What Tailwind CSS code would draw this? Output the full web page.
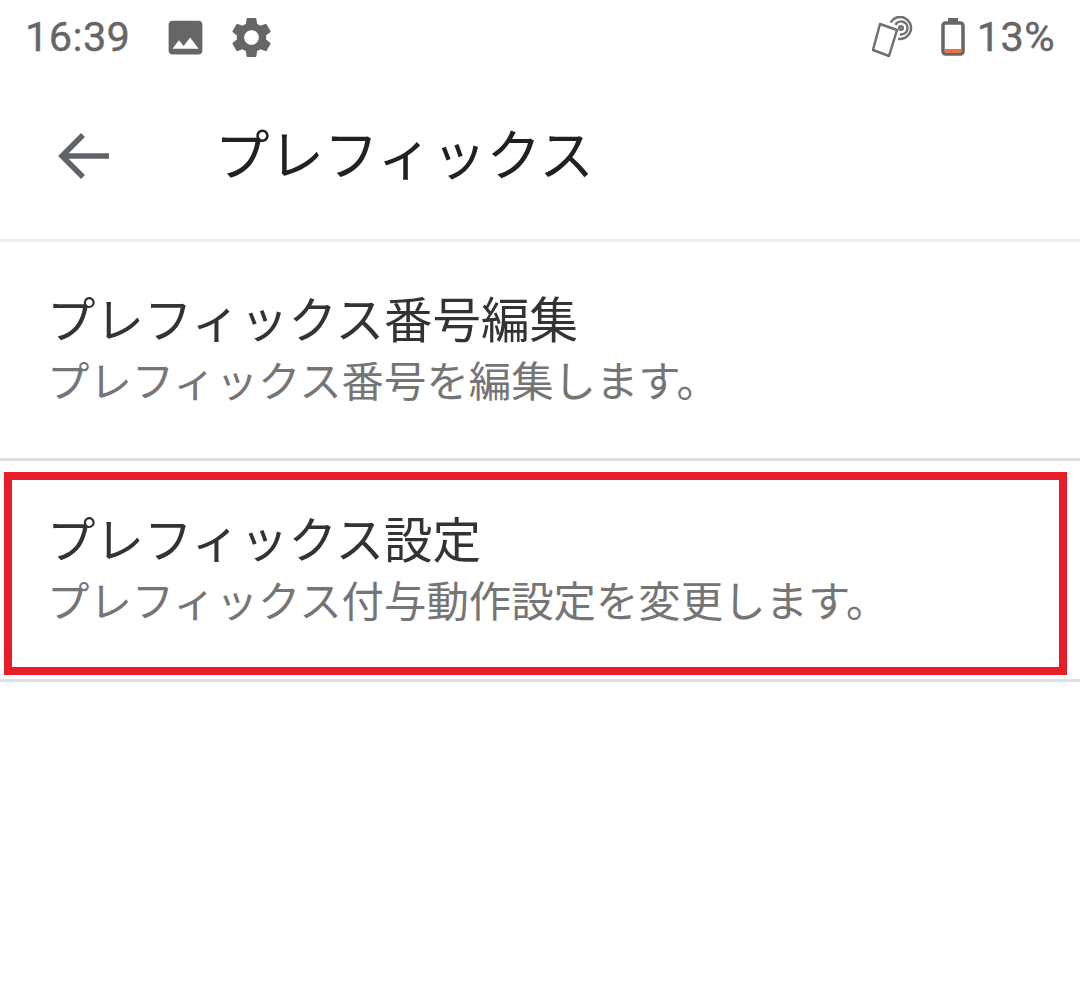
<!doctype html>
<html lang="ja"><head><meta charset="utf-8"><script src="https://cdn.jsdelivr.net/npm/@tailwindcss/browser@4"></script></head>
<body class="bg-white">
<div class="w-[1080px] h-[1003px] overflow-hidden bg-white font-['Roboto','Noto_Sans_CJK_JP',sans-serif]">
  <div class="h-[74px] flex items-center pl-[25px] pr-[25px] text-[#666666]">
    <span class="text-[41.500px] leading-none tracking-[0.4px] [-webkit-text-stroke:0.4px_#666666]">16:39</span>
    <svg class="ml-[33px] w-[45px] h-[45px]" viewBox="0 0 24 24" fill="#666666"><path d="M21 19V5c0-1.1-.9-2-2-2H5c-1.1 0-2 .9-2 2v14c0 1.1.9 2 2 2h14c1.1 0 2-.9 2-2zM8.500 13.500l2.500 3 3.500-4.500 4.500 6H5l3.500-4.500z"/></svg>
    <svg class="ml-[19px] w-[49px] h-[49px]" viewBox="0 0 24 24" fill="#666666"><path d="M19.14 12.94c.04-.3.06-.61.06-.94 0-.32-.02-.64-.07-.94l2.03-1.58c.18-.14.23-.41.12-.61l-1.92-3.32c-.12-.22-.37-.29-.59-.22l-2.39.96c-.5-.38-1.03-.7-1.62-.94l-.36-2.54c-.04-.24-.24-.41-.48-.41h-3.84c-.24 0-.43.17-.47.41l-.36 2.54c-.59.24-1.13.57-1.62.94l-2.39-.96c-.22-.08-.47 0-.59.22L2.74 8.87c-.12.21-.08.47.12.61l2.03 1.58c-.05.3-.09.63-.09.94s.02.64.07.94l-2.03 1.58c-.18.14-.23.41-.12.61l1.92 3.32c.12.22.37.29.59.22l2.39-.96c.5.38 1.03.7 1.62.94l.36 2.54c.05.24.24.41.48.41h3.84c.24 0 .44-.17.47-.41l.36-2.54c.59-.24 1.13-.56 1.62-.94l2.39.96c.22.08.47 0 .59-.22l1.92-3.32c.12-.22.07-.47-.12-.61l-2.01-1.58zM12 15.600c-1.980 0-3.600-1.620-3.600-3.600s1.620-3.600 3.600-3.600 3.600 1.620 3.600 3.600-1.620 3.600-3.600 3.600z"/></svg>
    <svg class="ml-auto w-[42px] h-[42px]" viewBox="0 0 42 42" fill="none" stroke="#707070" stroke-width="2.500">
      <path d="M8 8L25 14 17 40 1 34Z" stroke-linejoin="round"/>
      <path d="M18.500 6.500a11 11 0 1 1 7.600 16.300"/>
      <path d="M23.400 8.800a6.500 6.500 0 1 1 4.500 9.600"/>
      <circle cx="29" cy="12" r="1.800"/>
    </svg>
    <svg class="ml-[27px] w-[24px] h-[38px]" viewBox="0 0 24 38">
      <rect x="7" y="0" width="10" height="5" fill="#666666"/>
      <rect x="2" y="5" width="20" height="31" rx="2.500" fill="none" stroke="#666666" stroke-width="3.500"/>
      <rect x="4" y="31" width="16" height="4" fill="#e8704a"/>
    </svg>
    <span class="ml-[12px] text-[41.500px] leading-none tracking-[0.4px] [-webkit-text-stroke:0.4px_#666666]">13%</span>
  </div>
  <div class="h-[165px] flex items-center pl-[57px]">
    <svg class="w-[54px] h-[54px] mt-[-1px]" viewBox="0 0 54 54" fill="none" stroke="#5f6368" stroke-width="5.500"><path d="M52 27H7M26 6L5 27l21 21"/></svg>
    <span class="ml-[104px] text-[54.500px] leading-none text-[#212121]">プレフィックス</span>
  </div>
  <div class="h-[3px] bg-[#ececec]"></div>
  <div class="h-[216px] flex flex-col justify-center pl-[47px] pt-[7px]">
    <div class="text-[48.500px] leading-[58px] text-[#333333]">プレフィックス番号編集</div>
    <div class="text-[42.400px] leading-[64px] text-[#757575]">プレフィックス番号を編集します。</div>
  </div>
  <div class="h-[3px] bg-[#e0e0e0]"></div>
  <div class="h-[218px] flex flex-col justify-center pl-[47px] pt-[7px] relative">
    <div class="text-[48.500px] leading-[58px] text-[#333333]">プレフィックス設定</div>
    <div class="text-[42.400px] leading-[64px] text-[#757575]">プレフィックス付与動作設定を変更します。</div>
    <div class="absolute left-[4px] top-[11px] w-[1063px] h-[203px] border-[8px] border-[#e71d2a]"></div>
  </div>
  <div class="h-[3px] bg-[#e0e0e0]"></div>
</div>
</body></html>
